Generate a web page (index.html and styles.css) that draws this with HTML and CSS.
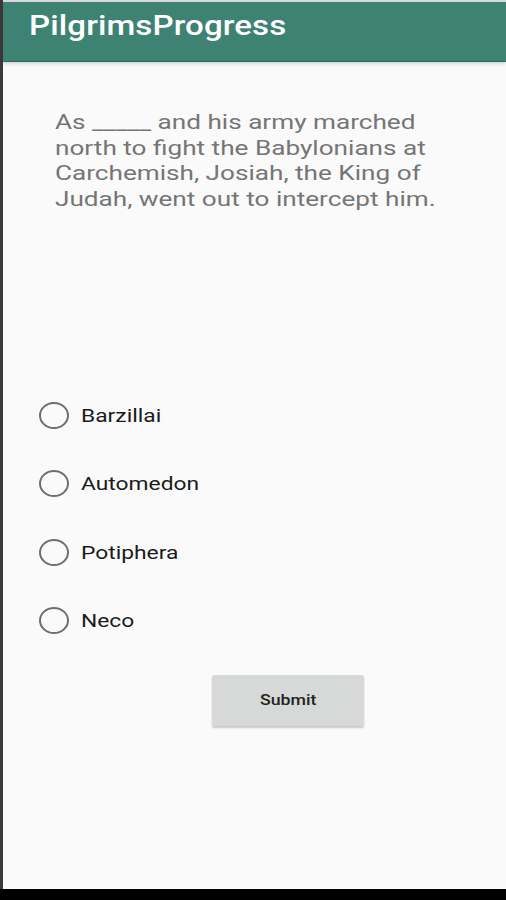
FILE: index.html
```html
<!DOCTYPE html>
<html>
<head>
<meta charset="utf-8">
<link rel="stylesheet" href="styles.css">
</head>
<body>
<div class="screen">
  <header class="appbar"><h1 class="title"><span class="wide">PilgrimsProgress</span></h1></header>
  <main class="content">
    <p class="question"><span class="wide">As _____ and his army marched<br>north to fight the Babylonians at<br>Carchemish, Josiah, the King of<br>Judah, went out to intercept him.</span></p>
    <div class="options">
      <label class="option"><span class="radio"></span><span class="label wide">Barzillai</span></label>
      <label class="option"><span class="radio"></span><span class="label wide">Automedon</span></label>
      <label class="option"><span class="radio"></span><span class="label wide">Potiphera</span></label>
      <label class="option"><span class="radio"></span><span class="label wide">Neco</span></label>
    </div>
    <div class="actions"><button class="submit"><span class="wide">Submit</span></button></div>
  </main>
  <div class="navbar"></div>
</div>
</body>
</html>
```
FILE: styles.css
```css
html, body { margin: 0; padding: 0; }
body {
  width: 506px; height: 900px; overflow: hidden;
  background: #e8e8e8;
  font-family: Roboto, "Noto Sans", sans-serif;
}
.wide {
  display: inline-block;
  transform: scaleX(1.18);
  transform-origin: left center;
  white-space: nowrap;
}
.screen {
  height: 900px;
  display: flex; flex-direction: column;
  border-left: 3px solid #3a3a3a;
  padding-top: 2px;
  box-sizing: border-box;
  background: #d9d9d9;
}
.appbar {
  height: 59px;
  background: #3d8273;
  border-bottom: 1px solid #2e6a5c;
  box-shadow: 0 2px 3px rgba(0,0,0,0.15);
  display: flex; align-items: flex-start;
  position: relative; z-index: 1;
}
.title {
  margin: 6px 0 0 26px;
  color: #fff;
  font-size: 28px; font-weight: 500;
  letter-spacing: 0.1px;
  line-height: 36px;
}
.content {
  flex: 1;
  background: #fafafa;
  display: flex; flex-direction: column;
}
.question {
  margin: 48px 20px 0 52px;
  color: #757575;
  font-size: 21px;
  line-height: 25.6px;
}
.question .wide { transform: scaleX(1.245); }
.options {
  margin-top: 190px;
  display: flex; flex-direction: column;
  gap: 42.5px;
  padding-left: 36px;
}
.option {
  display: flex; align-items: center;
  height: 26px;
}
.radio {
  width: 26px; height: 23px;
  border: 2px solid #6e6e6e;
  border-radius: 50%;
  flex: none;
}
.label {
  margin-left: 12px;
  font-size: 19px;
  color: #1a1a1a;
  transform: scaleX(1.2);
}
.actions {
  margin-top: 41px;
  display: flex; justify-content: center;
  padding-left: 66px;
}
.submit {
  width: 152px; height: 51px;
  background: #d7d8d8;
  border: none; border-radius: 2px;
  box-shadow: 0 2px 2px rgba(0,0,0,0.2);
  font-family: Roboto, sans-serif;
  font-size: 15px; font-weight: 500;
  color: #222;
  display: flex; align-items: center; justify-content: center;
  padding: 0 8px 0 0;
}
.navbar {
  height: 11px;
  background: #000;
  margin-left: -3px;
}
```
